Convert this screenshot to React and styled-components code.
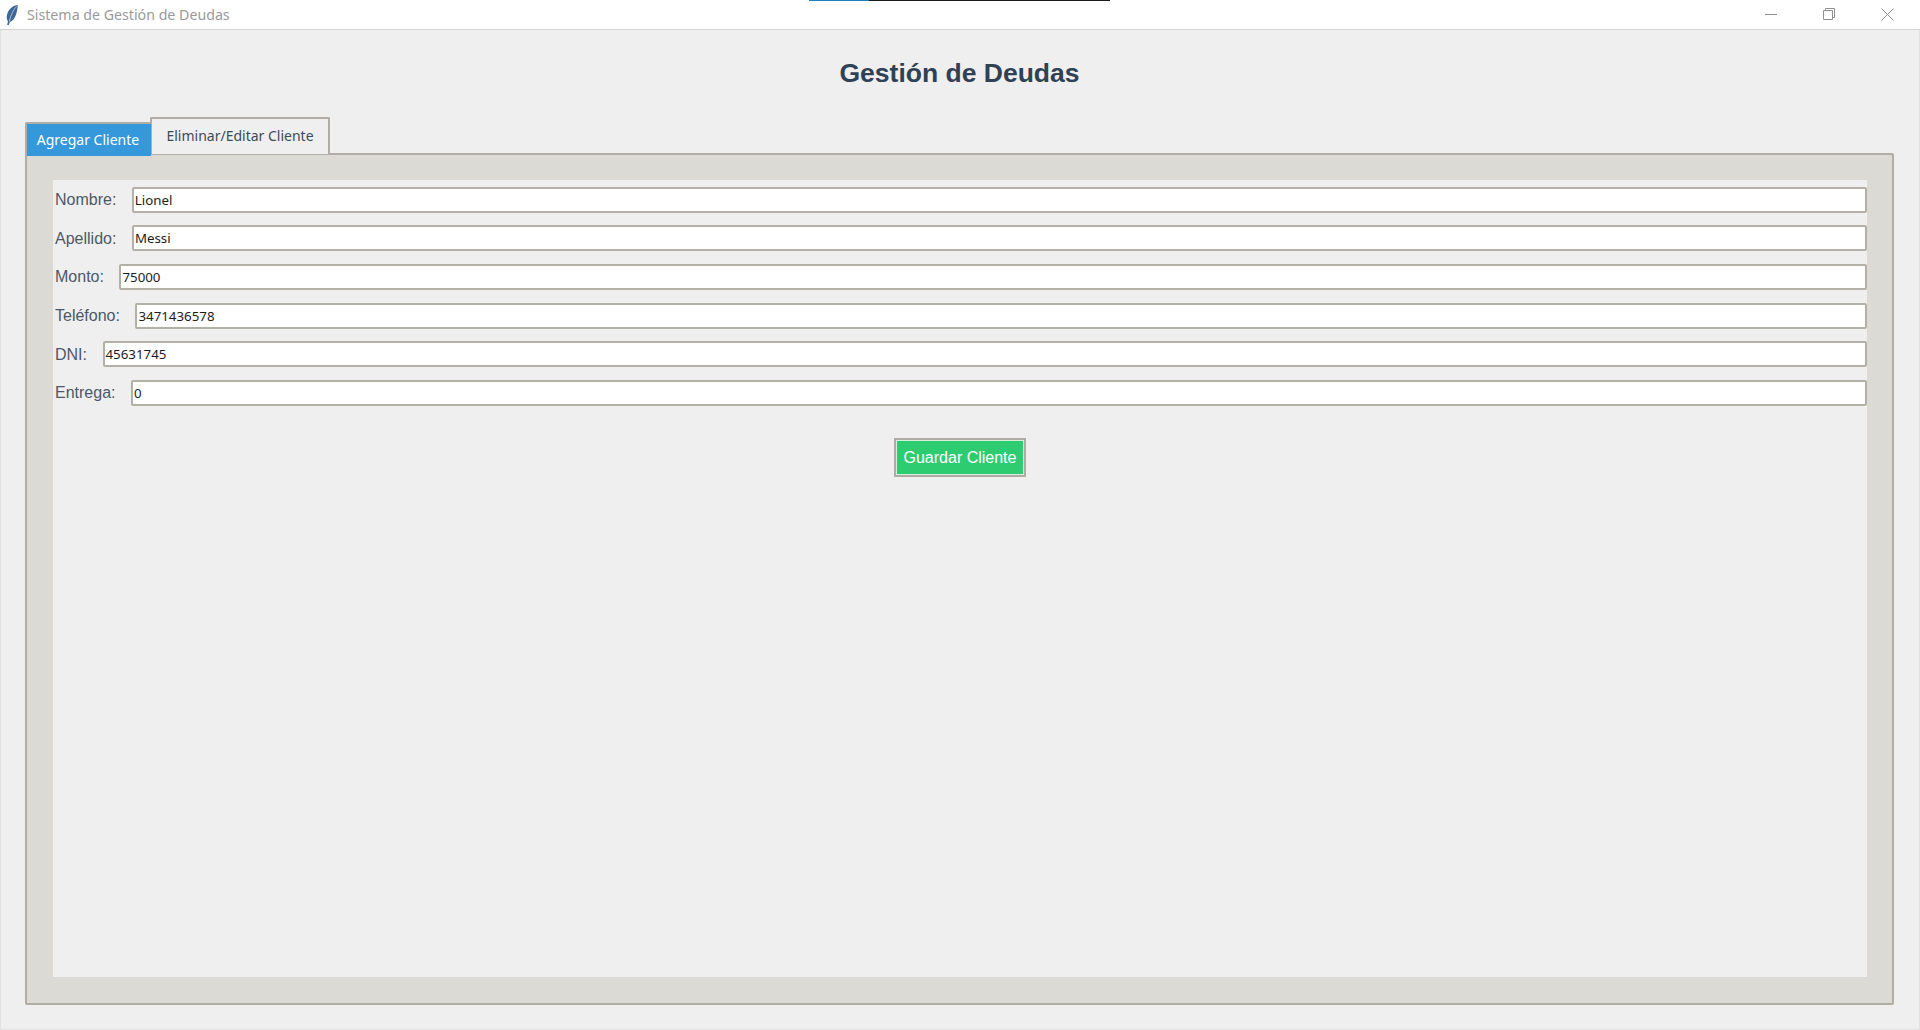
import React from 'react';
import styled, { createGlobalStyle } from 'styled-components';

const GlobalStyle = createGlobalStyle`
    html, body {
        margin: 0;
        padding: 0;
        height: 100%;
        overflow: hidden;
        background: #eeeeee;
    }
    * {
        box-sizing: border-box;
    }
`;

const Window = styled.div`
    position: relative;
    width: 1920px;
    height: 1030px;
    display: flex;
    flex-direction: column;
    background: #efefef;
`;

const CaptureStrip = styled.div`
    position: absolute;
    top: 0;
    left: 809px;
    display: flex;
    height: 1px;
`;

const StripPart = styled.span`
    display: block;
    width: ${(p) => p.$width}px;
    background: ${(p) => p.$color};
`;

const TitleBar = styled.header`
    height: 30px;
    flex: none;
    display: flex;
    align-items: center;
    padding-left: 6px;
    background: #ffffff;
    border-bottom: 1px solid #d2d2d2;
`;

const AppName = styled.span`
    margin-left: 9px;
    margin-bottom: 1px;
    font-family: "Noto Sans", sans-serif;
    font-size: 14.2px;
    color: #9a9a9a;
    white-space: nowrap;
`;

const WindowControls = styled.div`
    margin-left: auto;
    display: flex;
    height: 100%;
    padding: 0 4px 1px 0;
`;

const ControlButton = styled.span`
    width: 58px;
    display: flex;
    align-items: center;
    justify-content: center;
    color: #8f8f8f;
`;

const Content = styled.main`
    flex: 1;
    display: flex;
    flex-direction: column;
    padding: 0 25px 24px 24px;
    border-left: 1px solid #e2e2e2;
    border-right: 1px solid #e2e2e2;
    border-bottom: 1px solid #e2e2e2;
`;

const Heading = styled.h1`
    margin: 0;
    height: 87px;
    padding-top: 28px;
    text-align: center;
    font-family: "Liberation Sans", Arial, sans-serif;
    font-size: 26.500px;
    line-height: 30px;
    font-weight: bold;
    color: #2f4154;
`;

const TabBar = styled.div`
    display: flex;
    align-items: flex-start;
    height: 36px;
`;

const Tab = styled.div`
    position: relative;
    z-index: ${(p) => (p.$active ? 2 : 1)};
    font-family: "Noto Sans", sans-serif;
    font-size: 14px;
    white-space: nowrap;
    display: flex;
    align-items: center;
    justify-content: center;
    padding-bottom: 2px;
    ${(p) =>
        p.$active
            ? `
        width: 126px;
        height: 34px;
        margin-top: 5px;
        padding-right: 2px;
        background: #3498db;
        color: #ffffff;
        border: 2px solid #b0ada5;
        border-width: 2px 0 0 2px;
        border-top-left-radius: 2px;
    `
            : `
        width: 180px;
        height: 37px;
        margin-left: -1px;
        background: #efefef;
        color: #3d4a5a;
        border: 2px solid #b0ada5;
        border-bottom: 0;
        border-radius: 2px 2px 0 0;
    `}
`;

const Notebook = styled.section`
    flex: 1;
    padding: 25px 25px 26px 26px;
    background: #dcdad5;
    border: 2px solid #b0ada5;
    border-radius: 2px;
`;

const Panel = styled.div`
    height: 100%;
    display: flex;
    flex-direction: column;
    padding-top: 7.100px;
    background: #efefef;
`;

const FormRow = styled.div`
    display: flex;
    align-items: center;
    gap: 15.500px;
    height: 25px;
    margin-bottom: 13.670px;
    padding-left: 2px;
`;

const FieldLabel = styled.label`
    padding-top: 1px;
    font-family: "Liberation Sans", Arial, sans-serif;
    font-size: 16px;
    color: #4d5866;
    white-space: nowrap;
`;

const FieldValue = styled.div`
    flex: 1;
    height: 26px;
    display: flex;
    align-items: center;
    padding-left: 1px;
    background: #ffffff;
    border: 2px solid #b3b0a8;
    border-radius: 2px;
    font-family: "Noto Sans", sans-serif;
    font-size: 13.300px;
    color: #1c1c1c;
`;

const Actions = styled.div`
    display: flex;
    justify-content: center;
    margin-top: 19px;
`;

const SaveButton = styled.button`
    width: 132px;
    height: 39px;
    padding: 1px 0 0;
    background: #2ecc71;
    border: 2px solid #aeaca4;
    box-shadow: inset 0 0 0 1px #d8efe0;
    color: #ffffff;
    font-family: "Liberation Sans", Arial, sans-serif;
    font-size: 16px;
`;

const fields = [
    ['Nombre:', 'Lionel'],
    ['Apellido:', 'Messi'],
    ['Monto:', '75000'],
    ['Teléfono:', '3471436578'],
    ['DNI:', '45631745'],
    ['Entrega:', '0'],
];

const FeatherIcon = () => (
    <svg width="12" height="22" viewBox="0 0 12 22">
        <path d="M11.800 1C7.500 1.200 2.600 5 1.200 10c-.9 3.200-.5 5.600.7 7.200L1.200 21h1.600l1-3c4.700-1 7.500-9 8-17z" fill="#3f6796" />
        <path d="M10.500 2.500C7.500 5.500 5 10.500 3.300 17.500" stroke="#a9c3e0" strokeWidth="1" fill="none" />
    </svg>
);

const App = () => {
    return (
        <Window>
            <GlobalStyle />
            <CaptureStrip>
                <StripPart $width={60} $color="#1c7fc4" />
                <StripPart $width={241} $color="#1a1a1a" />
            </CaptureStrip>
            <TitleBar>
                <FeatherIcon />
                <AppName>Sistema de Gestión de Deudas</AppName>
                <WindowControls>
                    <ControlButton>
                        <svg width="12" height="12" viewBox="0 0 12 12">
                            <path d="M0 6.500h12" stroke="currentColor" fill="none" />
                        </svg>
                    </ControlButton>
                    <ControlButton>
                        <svg width="12" height="12" viewBox="0 0 12 12">
                            <path d="M.5 2.500h9v9h-9zM2.500 2.500v-2h9v9h-2" stroke="currentColor" fill="none" />
                        </svg>
                    </ControlButton>
                    <ControlButton>
                        <svg width="13" height="13" viewBox="0 0 13 13">
                            <path d="M.5.500l12 12M12.500.500l-12 12" stroke="currentColor" fill="none" />
                        </svg>
                    </ControlButton>
                </WindowControls>
            </TitleBar>
            <Content>
                <Heading>Gestión de Deudas</Heading>
                <TabBar>
                    <Tab $active>Agregar Cliente</Tab>
                    <Tab>Eliminar/Editar Cliente</Tab>
                </TabBar>
                <Notebook>
                    <Panel>
                        {fields.map(([label, value]) => (
                            <FormRow key={label}>
                                <FieldLabel>{label}</FieldLabel>
                                <FieldValue>{value}</FieldValue>
                            </FormRow>
                        ))}
                        <Actions>
                            <SaveButton>Guardar Cliente</SaveButton>
                        </Actions>
                    </Panel>
                </Notebook>
            </Content>
        </Window>
    );
};

export default App;
